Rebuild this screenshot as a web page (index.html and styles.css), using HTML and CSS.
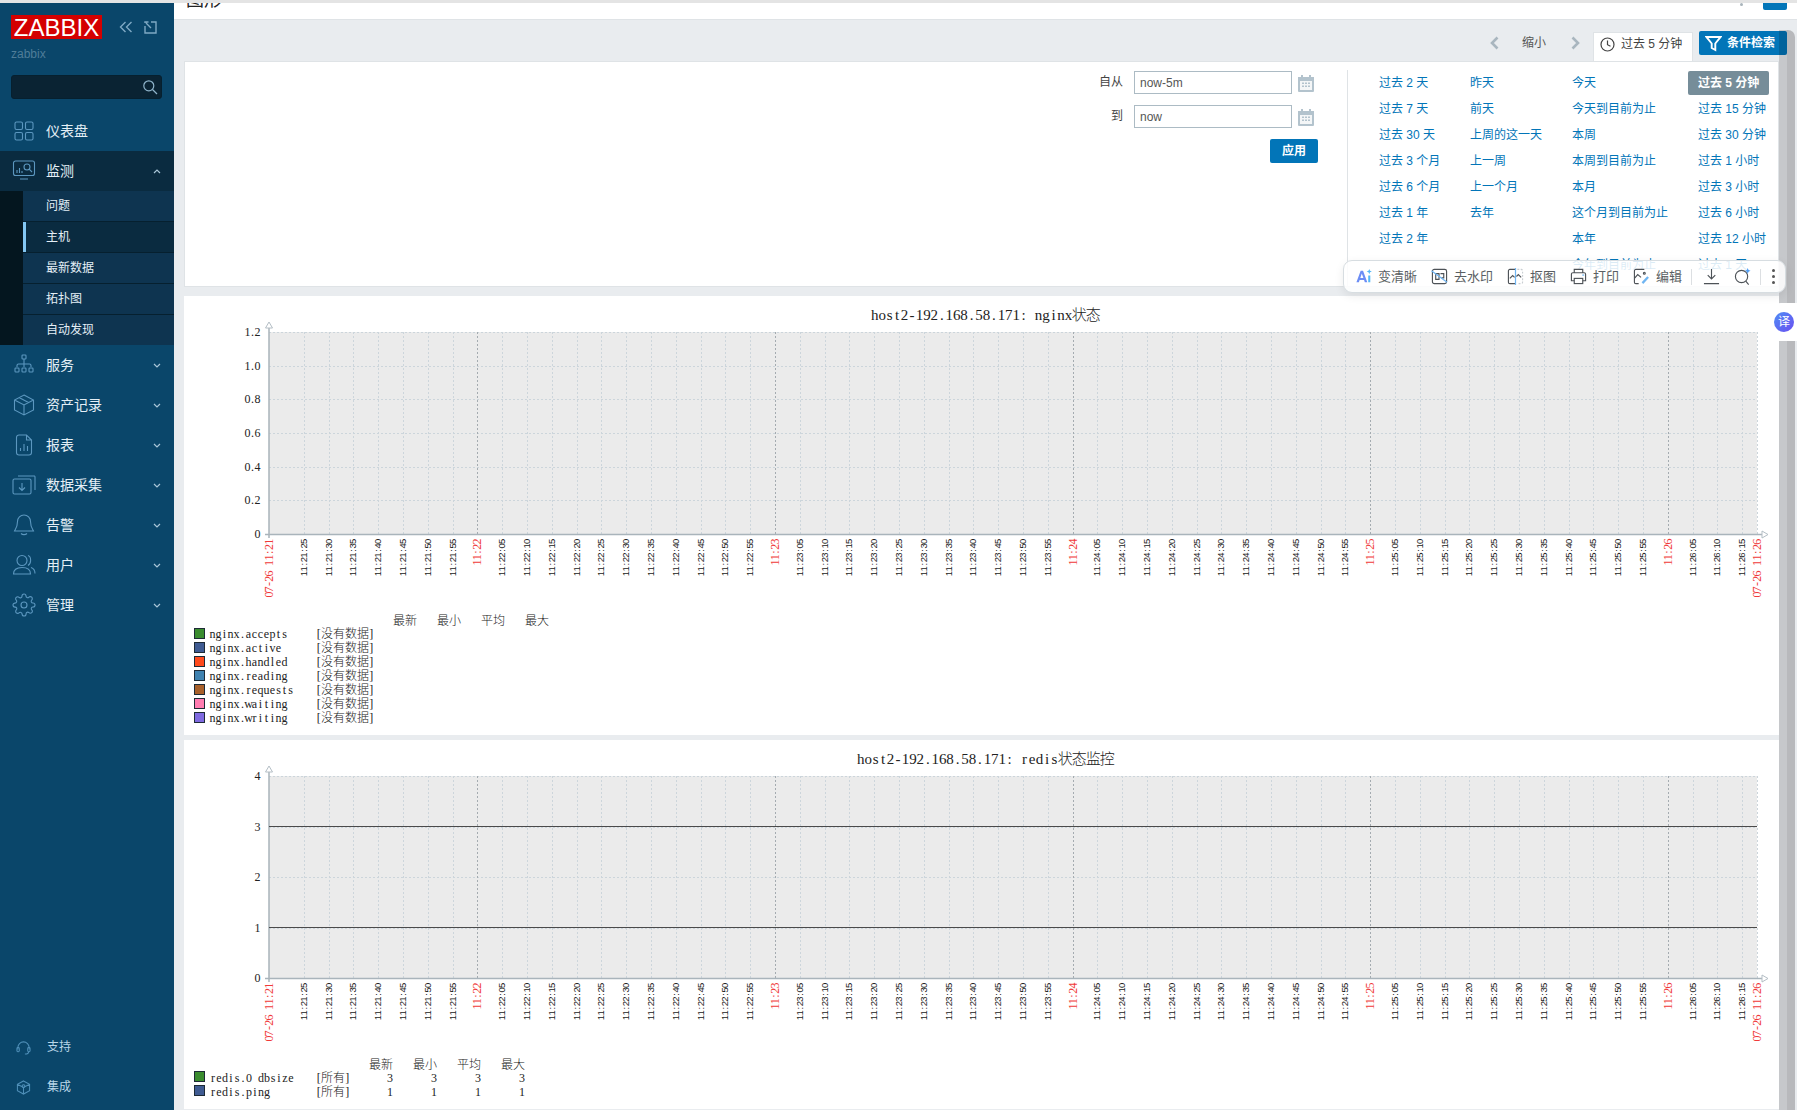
FILE: index.html
```html
<!DOCTYPE html>
<html lang="zh-CN">
<head>
<meta charset="utf-8">
<title>图形</title>
<link rel="stylesheet" href="styles.css">
</head>
<body>
<div class="top-strip"></div>
<div class="app">
  <aside class="sidebar">
    <div class="brand">
      <span class="logo">ZABBIX</span>
      <svg class="brand-ico" width="14" height="12" viewBox="0 0 14 12"><path d="M6.5 1 1.5 6l5 5M12.5 1l-5 5 5 5"/></svg>
      <svg class="brand-ico box" width="13" height="13" viewBox="0 0 13 13"><path d="M4.5 1H1v1M1 5v7h11V1H7M2 2l5 5"/></svg>
    </div>
    <div class="server">zabbix</div>
    <div class="search">
      <svg width="16" height="16" viewBox="0 0 16 16"><circle cx="6.8" cy="6.8" r="5"/><path d="m10.5 10.5 4.5 4.5"/></svg>
    </div>
    <nav class="menu">
      <a class="item"><svg class="ico" viewBox="0 0 24 24"><rect x="3" y="3" width="7.5" height="7.5" rx="1.5"/><rect x="13.5" y="3" width="7.5" height="7.5" rx="1.5"/><rect x="3" y="13.5" width="7.5" height="7.5" rx="1.5"/><rect x="13.5" y="13.5" width="7.5" height="7.5" rx="1.5"/></svg><span>仪表盘</span></a>
      <a class="item open"><svg class="ico" viewBox="0 0 24 24"><path d="M9 16.5H3.5a2 2 0 0 1-2-2V4a2 2 0 0 1 2-2h17a2 2 0 0 1 2 2v10.500a2 2 0 0 1-2 2z"/><path d="M8 20h8M5 14v-3M7.500 14V9M10 14v-2"/><circle cx="15" cy="8" r="3"/><path d="m17.200 10.200 2.800 2.800"/></svg><span>监测</span><svg class="chev" viewBox="0 0 8 5"><path d="M1 4l3-3 3 3"/></svg></a>
      <div class="sub">
        <div class="sub-list">
          <a class="sub-item">问题</a>
          <a class="sub-item current">主机</a>
          <a class="sub-item">最新数据</a>
          <a class="sub-item">拓扑图</a>
          <a class="sub-item">自动发现</a>
        </div>
      </div>
      <a class="item"><svg class="ico" viewBox="0 0 24 24"><rect x="10" y="2" width="4" height="4" rx=".8"/><path d="M12 6v5M5 14v-1.500a1.500 1.500 0 0 1 1.500-1.500h11a1.500 1.500 0 0 1 1.500 1.500V14M12 11v3"/><rect x="3" y="15" width="4" height="4" rx=".8"/><rect x="10" y="15" width="4" height="4" rx=".8"/><rect x="17" y="15" width="4" height="4" rx=".8"/></svg><span>服务</span><svg class="chev" viewBox="0 0 8 5"><path d="M1 1l3 3 3-3"/></svg></a>
      <a class="item"><svg class="ico" viewBox="0 0 24 24"><path d="M12 2 21.500 7v10L12 22 2.500 17V7zM2.500 7 12 12l9.500-5M12 12v10M7 4.500 16.500 9.500"/></svg><span>资产记录</span><svg class="chev" viewBox="0 0 8 5"><path d="M1 1l3 3 3-3"/></svg></a>
      <a class="item"><svg class="ico" viewBox="0 0 24 24"><path d="M14.500 2H7a2.500 2.500 0 0 0-2.500 2.500v15A2.500 2.500 0 0 0 7 22h10a2.500 2.500 0 0 0 2.500-2.500V7zM14.500 2v5h5M8.500 18v-3M12 18v-7M15.500 18v-5"/></svg><span>报表</span><svg class="chev" viewBox="0 0 8 5"><path d="M1 1l3 3 3-3"/></svg></a>
      <a class="item"><svg class="ico" viewBox="0 0 24 24"><rect x="1" y="6" width="18" height="15" rx="1.500"/><path d="M6 3h16.500a1 1 0 0 1 .5 1v13M10 10v7M7 14.500l3 3 3-3"/></svg><span>数据采集</span><svg class="chev" viewBox="0 0 8 5"><path d="M1 1l3 3 3-3"/></svg></a>
      <a class="item"><svg class="ico" viewBox="0 0 24 24"><path d="M12 2a6.500 6.500 0 0 0-6.500 6.500c0 6-2.500 8-3 9.500h19c-.5-1.500-3-3.500-3-9.500A6.500 6.500 0 0 0 12 2zM9 20.500c1.500 1.500 4.500 1.500 6 0"/></svg><span>告警</span><svg class="chev" viewBox="0 0 8 5"><path d="M1 1l3 3 3-3"/></svg></a>
      <a class="item"><svg class="ico" viewBox="0 0 24 24"><circle cx="10" cy="7.500" r="5"/><path d="M1.500 21c0-4 3-6.500 8.500-6.500s8.500 2.500 8.500 6.500zM16 2.500c3.500 1 3.500 8 0 10M19 14.500c2.500.8 4 3 4 6"/></svg><span>用户</span><svg class="chev" viewBox="0 0 8 5"><path d="M1 1l3 3 3-3"/></svg></a>
      <a class="item"><svg class="ico" viewBox="0 0 24 24"><path d="M12 15a3 3 0 1 0 0-6 3 3 0 0 0 0 6z"/><path d="M19.4 15a1.65 1.65 0 0 0 .33 1.82l.06.06a2 2 0 0 1 0 2.83 2 2 0 0 1-2.83 0l-.06-.06a1.65 1.65 0 0 0-1.82-.33 1.65 1.65 0 0 0-1 1.51V21a2 2 0 0 1-2 2 2 2 0 0 1-2-2v-.09A1.65 1.65 0 0 0 9 19.4a1.65 1.65 0 0 0-1.82.33l-.06.06a2 2 0 0 1-2.83 0 2 2 0 0 1 0-2.83l.06-.06a1.65 1.65 0 0 0 .33-1.82 1.65 1.65 0 0 0-1.51-1H3a2 2 0 0 1-2-2 2 2 0 0 1 2-2h.09A1.65 1.65 0 0 0 4.6 9a1.65 1.65 0 0 0-.33-1.82l-.06-.06a2 2 0 0 1 0-2.83 2 2 0 0 1 2.83 0l.06.06a1.65 1.65 0 0 0 1.82.33H9a1.65 1.65 0 0 0 1-1.51V3a2 2 0 0 1 2-2 2 2 0 0 1 2 2v.09a1.65 1.65 0 0 0 1 1.51 1.65 1.65 0 0 0 1.82-.33l.06-.06a2 2 0 0 1 2.83 0 2 2 0 0 1 0 2.83l-.06.06a1.65 1.65 0 0 0-.33 1.82V9a1.65 1.65 0 0 0 1.51 1H21a2 2 0 0 1 2 2 2 2 0 0 1-2 2h-.09a1.65 1.65 0 0 0-1.51 1z"/></svg><span>管理</span><svg class="chev" viewBox="0 0 8 5"><path d="M1 1l3 3 3-3"/></svg></a>
    </nav>
    <div class="foot">
      <a class="foot-item"><svg class="ico-s" viewBox="0 0 16 16"><path d="M2 10V8a6 6 0 0 1 12 0v2"/><rect x="1" y="8" width="2.500" height="4.500" rx="1"/><rect x="12.500" y="8" width="2.500" height="4.500" rx="1"/><path d="M13.500 12.500c0 1.500-2 2.500-4 2.500"/></svg><span>支持</span></a>
      <a class="foot-item"><svg class="ico-s" viewBox="0 0 16 16"><path d="M8 1l6.500 3.500v7L8 15l-6.500-3.500v-7zM1.500 4.500 8 8l6.500-3.500M8 8v7"/><circle cx="8" cy="6.500" r="1.500"/></svg><span>集成</span></a>
    </div>
  </aside>

  <main class="main">
    <header class="page-head">
      <h1 class="page-title">图形</h1>
      <div class="head-tools"><i class="head-dot"></i><span class="head-btn"></span></div>
    </header>

    <div class="tabs">
      <svg class="nav-arrow" viewBox="0 0 9 14"><path d="M7.500 1.500 2 7l5.500 5.500"/></svg>
      <span class="zoom-out">缩小</span>
      <svg class="nav-arrow" viewBox="0 0 9 14"><path d="M1.500 1.500 7 7l-5.500 5.500"/></svg>
      <div class="tab"><svg width="15" height="15" viewBox="0 0 15 15"><circle cx="7.500" cy="7.500" r="6.500"/><path d="M7.500 3.500v4.200l3 1.500"/></svg><span>过去 5 分钟</span></div>
      <button class="filter-btn" type="button"><svg width="17" height="17" viewBox="0 0 17 17"><path d="M1.500 2h14l-5.200 6.500V15l-3.600-2V8.500z"/></svg>条件检索</button>
    </div>

    <section class="filter">
      <form class="range">
        <div class="range-row"><label>自从</label><input type="text" value="now-5m"><svg class="cal" viewBox="0 0 18 18"><use href="#cal"/></svg></div>
        <div class="range-row"><label>到</label><input type="text" value="now"><svg class="cal" viewBox="0 0 18 18"><use href="#cal"/></svg></div>
        <div class="range-apply"><button type="button">应用</button></div>
      </form>
      <div class="quick">
        <a>过去 2 天</a><a>昨天</a><a>今天</a><a class="selected">过去 5 分钟</a>
        <a>过去 7 天</a><a>前天</a><a>今天到目前为止</a><a>过去 15 分钟</a>
        <a>过去 30 天</a><a>上周的这一天</a><a>本周</a><a>过去 30 分钟</a>
        <a>过去 3 个月</a><a>上一周</a><a>本周到目前为止</a><a>过去 1 小时</a>
        <a>过去 6 个月</a><a>上一个月</a><a>本月</a><a>过去 3 小时</a>
        <a>过去 1 年</a><a>去年</a><a>这个月到目前为止</a><a>过去 6 小时</a>
        <a>过去 2 年</a><span></span><a>本年</a><a>过去 12 小时</a>
        <span></span><span></span><a>今年到目前为止</a><a>过去 1 天</a>
      </div>
    </section>

    <section class="graph-card first"><svg class="graph" id="g1" width="1595" height="439" viewBox="184 296 1595 439"></svg></section>
    <section class="graph-card"><svg class="graph" id="g2" width="1595" height="369" viewBox="184 740 1595 369"></svg></section>
  </main>
</div>

<svg class="defs" width="0" height="0"><defs>
  <g id="cal"><path class="cal-b" d="M1 3h3V1h2v2h6V1h2v2h3v14a1 1 0 0 1-1 1H2a1 1 0 0 1-1-1z"/><path class="cal-w" d="M3 7h12v9H3z"/><path class="cal-b" d="M5 8.500h2v1.500H5zM8 8.500h2v1.500H8zM11 8.500h2v1.500h-2zM5 11.500h2V13H5zM8 11.500h2V13H8zM11 11.500h2V13h-2z"/></g>
</defs></svg>

<div class="scrollbar"><i></i></div>

<div class="imgbar">
  <span class="tool"><svg viewBox="0 0 18 18"><path class="t-ai" d="M6 3h2.500L13 15h-2.600l-.8-2.400H4.900L4.100 15H1.500zM5.600 10.500h3.300L7.200 5.800z"/><path class="t-ai2" d="M14 8h2.200v7H14zM15.100 1l.8 2 2 .8-2 .8-.8 2-.8-2-2-.8 2-.8z"/></svg>变清晰</span>
  <span class="tool"><svg viewBox="0 0 18 18"><rect class="t-l" x="1.500" y="1.500" width="15" height="15" rx="2"/><path class="t-l" d="M5 6h3.500v6H5zM10 6h3.500v4.500H11"/><path class="t-c" d="M.5 3 17 15"/></svg>去水印</span>
  <span class="tool"><svg viewBox="0 0 18 18"><path class="t-l" d="M9 1.500H3A1.500 1.500 0 0 0 1.500 3v12A1.500 1.500 0 0 0 3 16.500h6"/><path class="t-d" d="M11 1.500h4A1.500 1.500 0 0 1 16.500 3v12a1.500 1.500 0 0 1-1.500 1.500h-4"/><path class="t-c" d="M9 0v18"/><path class="t-l" d="M3 11l3-3 2 2M10 9l2-2 3 3"/></svg>抠图</span>
  <span class="tool"><svg viewBox="0 0 18 18"><path class="t-l" d="M4.500 5V1.500h9V5M4.500 13.500H1.500V6.500A1.500 1.500 0 0 1 3 5h12a1.500 1.500 0 0 1 1.500 1.500v7h-3"/><rect class="t-l" x="4.500" y="11" width="9" height="5.500"/><path class="t-c" d="M13 7.500h2"/></svg>打印</span>
  <span class="tool"><svg viewBox="0 0 18 18"><path class="t-l" d="M12 1.500H3A1.500 1.500 0 0 0 1.500 3v12A1.500 1.500 0 0 0 3 16.500h3M1.500 11l3.500-4 3.500 3"/><circle class="t-l" cx="12" cy="5.500" r="1"/><path class="t-c thick" d="M10 16l6-6.500"/></svg>编辑</span>
  <i class="tool-sep"></i>
  <svg class="tool-ico" viewBox="0 0 18 18"><path class="t-l" d="M9 1v10M5 7.500 9 11.500l4-4M1 16.500h16"/></svg>
  <svg class="tool-ico" viewBox="0 0 18 18"><circle class="t-l" cx="8" cy="9" r="6.500"/><path class="t-l" d="m12.500 14 3 3.500"/><path class="t-star" d="M14.500 0l.9 2.100 2.100.9-2.100.9-.9 2.100-.9-2.100-2.100-.9 2.100-.9z"/></svg>
  <i class="tool-sep second"></i>
  <span class="dots"><i></i><i></i><i></i></span>
</div>

<div class="translate"><span class="translate-dot">译</span></div>

<script src="script.js"></script>
</body>
</html>
```

FILE: styles.css
```css
* { box-sizing: border-box; }
html, body { margin: 0; padding: 0; width: 1797px; height: 1110px; overflow: hidden; }
body {
  position: relative;
  background: #fff;
  font: 12px/1.2 "Liberation Sans", "Noto Sans CJK SC", sans-serif;
  color: #333;
}
a { cursor: pointer; }
.top-strip { height: 3px; background: #e4e4e4; }
.app { display: flex; height: 1107px; }

/* sidebar */
.sidebar { width: 174px; flex: none; display: flex; flex-direction: column; background: #0a466a; color: #e4eff6; }
.brand { display: flex; align-items: center; padding: 12px 0 0 11px; height: 36px; }
.logo {
  width: 91px; height: 24px; background: #d40000; color: #fff;
  font-size: 24px; line-height: 25px; text-align: center; flex: none;
}
.brand-ico { margin-left: 17px; fill: none; stroke: #7fa9c4; stroke-width: 1.4; }
.brand-ico.box { margin-left: 11px; }
.server { margin: 8px 0 0 11px; height: 15px; line-height: 15px; color: #4f7d99; }
.search {
  margin: 13px 12px 0 11px; height: 24px; background: #0a2333; border: 1px solid #06202f; border-radius: 3px;
  display: flex; align-items: center; justify-content: flex-end; padding-right: 3px;
}
.search svg { fill: none; stroke: #8fb4cb; stroke-width: 1.2; }
.menu { margin-top: 12px; display: flex; flex-direction: column; }
.item { height: 40px; display: flex; align-items: center; padding: 0 12px; font-size: 14px; }
.item.open { background: #0a2b40; }
.ico { width: 24px; height: 24px; flex: none; margin-right: 10px; fill: none; stroke: #5c97bf; stroke-width: 1.1; }
.chev { width: 8px; height: 5px; margin-left: auto; margin-right: 1px; fill: none; stroke: #a9c6d8; stroke-width: 1.2; }
.sub { padding-left: 23px; background: #04161f; }
.sub-list { display: flex; flex-direction: column; gap: 1px; background: #06202f; }
.sub-item { height: 30px; display: flex; align-items: center; padding-left: 23px; background: #0e3450; }
.sub-item.current { background: #0a2b40; padding-left: 20px; border-left: 3px solid #83c6f2; }
.foot { margin-top: auto; padding-bottom: 3px; display: flex; flex-direction: column; }
.foot-item { height: 40px; display: flex; align-items: center; padding-left: 16px; color: #b9d6e8; }
.ico-s { width: 15px; height: 15px; margin-right: 16px; fill: none; stroke: #4f8fb8; stroke-width: 1.100; }

/* main */
.main { flex: 1; min-width: 0; background: #e9ecef; display: flex; flex-direction: column; }
.page-head { height: 17px; flex: none; background: #fff; border-bottom: 1px solid #dfe3e6; display: flex; justify-content: space-between; overflow: hidden; }
.page-title { margin: -15px 0 0 12px; font-size: 18px; line-height: 24px; font-weight: 400; color: #222; }
.head-tools { display: flex; align-items: flex-start; gap: 20px; padding-right: 10px; }
.head-dot { width: 3px; height: 3px; margin-top: 0; border-radius: 50%; background: #a9b4bb; }
.head-btn { width: 24px; height: 7px; background: #0275b8; border-radius: 0 0 2px 2px; }

.tabs { height: 41px; flex: none; display: flex; align-items: flex-start; padding: 11px 10px 0 0; justify-content: flex-end; }
.nav-arrow { width: 9px; height: 14px; margin-top: 5px; fill: none; stroke: #a9b6bf; stroke-width: 2.600; }
.nav-arrow:first-child { margin-right: -1px; transform: translateX(1px); }
.zoom-out { width: 74px; text-align: center; margin-top: 5px; color: #555; }
.tabs .nav-arrow + .zoom-out + .nav-arrow { margin-right: 13px; }
.tab {
  width: 100px; height: 30px; margin-top: 1px; background: #fff; border: 1px solid #dfe3e6; border-bottom: 0;
  display: flex; align-items: center; gap: 6px; padding: 0 0 6px 6px; color: #444; margin-bottom: -1px;
}
.tab svg { fill: none; stroke: #444; stroke-width: 1.2; flex: none; }
.filter-btn {
  width: 88px; height: 24px; margin-left: 6px; border: 0; border-radius: 2px; background: #0275b8; color: #fff;
  display: flex; align-items: center; gap: 5px; padding: 0 0 0 6px; font: inherit; font-size: 12px; font-weight: 700;
}
.filter-btn svg { fill: none; stroke: #fff; stroke-width: 1.900; flex: none; }

.filter { margin: 0 18px 0 10px; height: 226px; flex: none; background: #fff; border: 1px solid #dfe3e6; display: flex; }
.range { flex: 1; display: flex; flex-direction: column; gap: 11px; padding: 9px 29px 0 0; align-items: flex-end; }
.range-row { display: flex; align-items: center; height: 23px; }
.range-row label { margin-right: 11px; color: #444; }
.range-row input {
  width: 158px; height: 23px; border: 1px solid #acbbc4; padding: 0 5px; color: #555; font: inherit; outline: 0; background: #fff; border-radius: 0;
}
.cal { width: 18px; height: 18px; margin: 0 3px 0 5px; }
.cal-b { fill: #b3c3cd; }
.cal-w { fill: #f4f6f7; }
.range-apply button {
  display: block; width: 48px; height: 24px; border: 0; border-radius: 2px; background: #0275b8; color: #fff; font: inherit; font-weight: 700; padding: 0;
}
.quick {
  width: 431px; flex: none; margin-top: 8px; border-left: 1px solid #dfe3e6; padding: 0 0 0 31px;
  display: grid; grid-template-columns: 91px 102px 126px 1fr; grid-auto-rows: 26px; align-items: center; color: #0275b8;
  align-content: start;
}
.quick a { white-space: nowrap; color: #0275b8; line-height: 24px; }
.quick .selected { background: #768d99; color: #fff; margin-left: -10px; width: 81px; padding-left: 10px; border-radius: 2px; height: 24px; font-weight: 700; }

.graph-card { margin: 5px 18px 0 10px; flex: none; background: #fff; }
.graph-card.first { margin-top: 9px; }
.graph { display: block; }
.defs { position: absolute; }

/* chart */
.plot { fill: #ebebeb; }
.grid { stroke: #ccd5db; stroke-width: 1; stroke-dasharray: 2 2; fill: none; }
.grid.minute { stroke: #a4abb0; }
.axis { stroke: #a9b4bb; stroke-width: 1.500; fill: none; }
.arrow { stroke: #b4bec5; stroke-width: 1; fill: #fff; }
.level { stroke: #4a4a4a; stroke-width: 1; }
.t-title, .t-y, .t-leg { font-family: "Liberation Serif", "Noto Sans CJK SC", serif; font-weight: 300; fill: #222; text-anchor: middle; }
.t-title { font-size: 15px; }
.t-y { font-size: 12px; }
.t-leg { font-size: 12px; }
.t-cjk { font-family: "Noto Sans CJK SC", sans-serif; font-weight: 300; font-size: 12px; fill: #222; }
.t-tick { font-family: "Liberation Sans", sans-serif; font-size: 9.500px; fill: #222; text-anchor: middle; }
.t-red { font-family: "Liberation Serif", serif; font-size: 12px; fill: #f03a3a; text-anchor: middle; }
.sw { stroke: #1d2a36; stroke-width: 1; }

/* overlays */
.scrollbar {
  position: absolute; left: 1779px; top: 30px; bottom: 0; width: 16px; z-index: 3;
  background: rgba(0,0,0,.15); border-radius: 0 7px 0 0;
}
.scrollbar i { position: absolute; left: 8px; top: 0; right: 0; bottom: 0; background: rgba(0,0,0,.07); border-radius: 0 7px 0 0; }
.imgbar {
  position: absolute; left: 1343px; top: 260px; width: 443px; height: 33px; z-index: 4;
  display: flex; align-items: center; gap: 14px; padding-left: 11px;
  background: rgba(255,255,255,.86); border: 1px solid #d7dde1; border-radius: 9px;
  box-shadow: 0 3px 10px rgba(0,0,0,.08); font-size: 13px; color: #5a5f63;
}
.tool { display: flex; align-items: center; gap: 6px; white-space: nowrap; }
.tool svg, .tool-ico { width: 17px; height: 17px; flex: none; }
.t-l { fill: none; stroke: #4d5257; stroke-width: 1.200; }
.t-d { fill: none; stroke: #c9ced2; stroke-width: 1.200; stroke-dasharray: 2 1.500; }
.t-c { fill: none; stroke: #6fb5f2; stroke-width: 1.300; }
.t-c.thick { stroke-width: 2.400; }
.t-ai { fill: #6c8df5; }
.t-ai2 { fill: #55b8f7; }
.t-star { fill: #4f9df5; }
.tool-sep { width: 1px; height: 16px; margin: 0 -3px 0 -5px; background: #dcdfe2; flex: none; }
.tool-sep.second { margin: 0 -3px 0 -5px; }
.dots { display: flex; flex-direction: column; gap: 3px; }
.dots i { width: 3px; height: 3px; border-radius: 50%; background: #555; }
.translate {
  position: absolute; left: 1762px; top: 303px; width: 35px; height: 38px; z-index: 4;
  background: #fff; border-radius: 19px 0 0 19px; display: flex; align-items: center; padding-left: 12px;
}
.translate-dot {
  width: 20px; height: 20px; border-radius: 50%; background: linear-gradient(135deg, #4f8df5, #6a4ff0); color: #fff;
  font-size: 12px; line-height: 20px; text-align: center;
}
```

FILE: script.js
```js
// Draws both Zabbix graphs into their SVGs. Coordinates are page coordinates (see the viewBox).
var L = 269, R = 1757;
var PX_PER_SEC = (R - L) / 300;

function esc(s) { return s.replace(/&/g, "&amp;").replace(/</g, "&lt;"); }

// Fixed-pitch text: every glyph gets its own cell, as the bitmap font in the picture does.
function cells(str, x0, step, wide) {
  var xs = [], x = x0;
  for (var i = 0; i < str.length; i++) {
    var w = str.charCodeAt(i) > 255 ? wide : step;
    xs.push((x + w / 2).toFixed(1));
    x += w;
  }
  return xs.join(" ");
}

function text(cls, str, x0, y, step, wide) {
  return '<text class="' + cls + '" x="' + cells(str, x0, step, wide || step * 2) + '" y="' + y + '">' + esc(str) + "</text>";
}

function vertical(cls, str, x, top, step, baseOff) {
  var len = str.length * step;
  return '<g transform="translate(' + (x + baseOff) + "," + top + ') rotate(-90)"><text class="' + cls + '" x="' + cells(str, -len, step, step) + '" y="0">' + esc(str) + "</text></g>";
}

function pad(n) { return (n < 10 ? "0" : "") + n; }

function plot(top, bottom, divisions, labels) {
  var labelTop = bottom + 5;
  var s = '<rect class="plot" x="' + L + '" y="' + top + '" width="' + (R - L) + '" height="' + (bottom - top) + '"/>';
  for (var d = 0; d < divisions; d++) {
    var y = Math.round(top + (bottom - top) * d / divisions) + 0.5;
    s += '<path class="grid" d="M' + L + " " + y + "H" + R + '"/>';
  }
  for (var t = 7; t <= 297; t += 5) {
    var x = Math.round(L + t * PX_PER_SEC) + 0.5;
    var abs = 11 * 3600 + 21 * 60 + 18 + t;
    var isMinute = abs % 60 === 0;
    s += '<path class="grid' + (isMinute ? " minute" : "") + '" d="M' + x + " " + top + "V" + bottom + '"/>';
  }
  s += '<path class="grid" d="M' + (R + 0.5) + " " + top + "V" + bottom + '"/>';
  s += '<path class="axis" d="M' + (L - 4) + " " + (bottom + 0.5) + "H" + (R + 5) + "M" + L + " " + (top - 6) + "V" + (bottom + 4) + '"/>';
  s += '<path class="arrow" d="M' + L + " " + (top - 10) + "l3.500 6h-7z" + '"/>';
  s += '<path class="arrow" d="M' + (R + 5) + " " + (bottom - 3) + "l6 3.500-6 3.500z" + '"/>';
  labels.forEach(function (lab, i) {
    var y = Math.round(top + (bottom - top) * i / divisions) + 4;
    s += text("t-y", lab, 260 - lab.length * 5, y, 5);
  });
  for (t = 7; t <= 297; t += 5) {
    x = Math.round(L + t * PX_PER_SEC);
    abs = 11 * 3600 + 21 * 60 + 18 + t;
    var h = Math.floor(abs / 3600), m = Math.floor(abs / 60) % 60, sec = abs % 60;
    if (sec === 0) s += vertical("t-red", h + ":" + pad(m), x, labelTop, 5.2, 4);
    else s += vertical("t-tick", h + ":" + pad(m) + ":" + pad(sec), x, labelTop, 4.6, 3);
  }
  s += vertical("t-red", "07-26 11:21", L, labelTop, 5.3, 4);
  s += vertical("t-red", "07-26 11:26", R, labelTop, 5.3, 4);
  return s;
}

function swatch(y, color) {
  return '<rect class="sw" x="194.500" y="' + y + '.5" width="10" height="10" fill="' + color + '"/>';
}

function head(xs, y) {
  var names = ["最新", "最小", "平均", "最大"], s = "";
  names.forEach(function (n, i) { s += '<text class="t-cjk" x="' + xs[i] + '" y="' + y + '">' + n + "</text>"; });
  return s;
}

function graph1() {
  var s = text("t-title", "host2-192.168.58.171: nginx状态", 871, 320, 7.45, 14);
  s += plot(332, 534, 6, ["1.2", "1.0", "0.8", "0.6", "0.4", "0.2", "0"]);
  s += head([393, 437, 481, 525], 625);
  var rows = [
    ["nginx.accepts", "#3a8c2f"], ["nginx.active", "#3f5b92"], ["nginx.handled", "#ff4a1c"],
    ["nginx.reading", "#3f82b0"], ["nginx.requests", "#a8602a"], ["nginx.waiting", "#ff7cb0"], ["nginx.writing", "#7f6ae0"]
  ];
  rows.forEach(function (r, i) {
    var y = 628 + i * 14;
    s += swatch(y, r[1]);
    s += text("t-leg", r[0], 209.5, y + 10, 6);
    s += text("t-leg", "[没有数据]", 316.5, y + 10, 4.5, 12);
  });
  document.getElementById("g1").innerHTML = s;
}

function graph2() {
  var s = text("t-title", "host2-192.168.58.171: redis状态监控", 857, 764, 7.45, 14);
  s += plot(776, 978, 4, ["4", "3", "2", "1", "0"]);
  [826.5, 927.5].forEach(function (y) {
    s += '<path class="level" d="M' + L + " " + y + "H" + R + '"/>';
  });
  s += head([369, 413, 457, 501], 1069);
  [["redis.0 dbsize", "#3a8c2f", "3"], ["redis.ping", "#3f5b92", "1"]].forEach(function (r, i) {
    var y = 1071 + i * 14;
    s += swatch(y, r[1]);
    s += text("t-leg", r[0], 210, y + 11, 6);
    s += text("t-leg", "[所有]", 316.5, y + 11, 4.5, 12);
    [387, 431, 475, 519].forEach(function (x) {
      s += text("t-leg", r[2], x, y + 11, 6);
    });
  });
  document.getElementById("g2").innerHTML = s;
}

graph1();
graph2();
```
